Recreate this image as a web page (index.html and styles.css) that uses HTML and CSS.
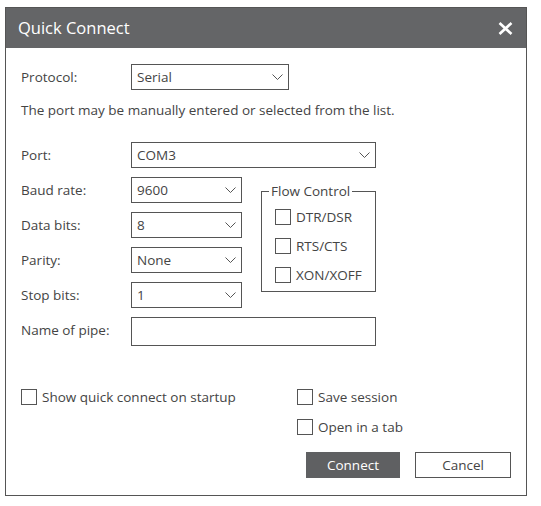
FILE: index.html
```html
<!DOCTYPE html>
<html lang="en">
<head>
    <meta charset="UTF-8">
    <meta name="viewport" content="width=device-width, initial-scale=1.0">
    <title>Quick Connect</title>
    <link rel="stylesheet" href="styles.css">
</head>
<body>

<!-- Dialog -->
<div class="dialog">
    <div class="title-bar">
        <span class="title">Quick Connect</span>
        <svg class="close-icon" width="15" height="13" viewBox="0 0 15 13">
            <path d="M1.5 1 L13.5 12 M13.5 1 L1.5 12" stroke="#fff" stroke-width="2.6" fill="none"/>
        </svg>
    </div>

    <div class="dialog-body">
        <div class="protocol-row">
            <span class="field-label">Protocol:</span>
            <div class="select select-protocol">
                <span>Serial</span>
                <svg class="chevron" width="11" height="6" viewBox="0 0 11 6"><path d="M0.5 0.5 L5.5 5.5 L10.5 0.5" stroke="#555" stroke-width="1" fill="none"/></svg>
            </div>
        </div>

        <p class="hint">The port may be manually entered or selected from the list.</p>

        <div class="form-grid">
            <span class="field-label">Port:</span>
            <div class="select select-wide">
                <span>COM3</span>
                <svg class="chevron" width="11" height="6" viewBox="0 0 11 6"><path d="M0.5 0.5 L5.5 5.5 L10.5 0.5" stroke="#555" stroke-width="1" fill="none"/></svg>
            </div>

            <span class="field-label">Baud rate:</span>
            <div class="select">
                <span>9600</span>
                <svg class="chevron" width="11" height="6" viewBox="0 0 11 6"><path d="M0.5 0.5 L5.5 5.5 L10.5 0.5" stroke="#555" stroke-width="1" fill="none"/></svg>
            </div>

            <fieldset class="flow-control">
                <legend>Flow Control</legend>
                <div class="check"><span class="box"></span>DTR/DSR</div>
                <div class="check"><span class="box"></span>RTS/CTS</div>
                <div class="check"><span class="box"></span>XON/XOFF</div>
            </fieldset>

            <span class="field-label">Data bits:</span>
            <div class="select">
                <span>8</span>
                <svg class="chevron" width="11" height="6" viewBox="0 0 11 6"><path d="M0.5 0.5 L5.5 5.5 L10.5 0.5" stroke="#555" stroke-width="1" fill="none"/></svg>
            </div>

            <span class="field-label">Parity:</span>
            <div class="select">
                <span>None</span>
                <svg class="chevron" width="11" height="6" viewBox="0 0 11 6"><path d="M0.5 0.5 L5.5 5.5 L10.5 0.5" stroke="#555" stroke-width="1" fill="none"/></svg>
            </div>

            <span class="field-label">Stop bits:</span>
            <div class="select">
                <span>1</span>
                <svg class="chevron" width="11" height="6" viewBox="0 0 11 6"><path d="M0.5 0.5 L5.5 5.5 L10.5 0.5" stroke="#555" stroke-width="1" fill="none"/></svg>
            </div>

            <span class="field-label">Name of pipe:</span>
            <div class="text-input"></div>
        </div>

        <div class="options">
            <div class="options-left">
                <div class="check"><span class="box"></span>Show quick connect on startup</div>
            </div>
            <div class="options-right">
                <div class="check"><span class="box"></span>Save session</div>
                <div class="check"><span class="box"></span>Open in a tab</div>
            </div>
        </div>

        <div class="buttons">
            <div class="btn btn-primary">Connect</div>
            <div class="btn">Cancel</div>
        </div>
    </div>
</div>

</body>
</html>
```

FILE: styles.css
```css
body {
    margin: 0;
    background: #fff;
    font-family: "Open Sans", "Noto Sans", sans-serif;
    font-size: 13.5px;
    color: #444;
}

/* Dialog frame */
.dialog {
    box-sizing: border-box;
    width: 522px;
    margin: 7px 0 0 5px;
    border: 1px solid #555;
}

.title-bar {
    height: 40px;
    background: #646567;
    display: flex;
    align-items: center;
    justify-content: space-between;
    padding: 0 12px 0 12px;
}

.title {
    color: #fff;
    font-size: 16.5px;
    padding-bottom: 1px;
}

.close-icon {
    margin-right: 1px;
}

.dialog-body {
    padding: 16px 15px 17px 15px;
}

.field-label {
    line-height: 26px;
}

/* Protocol */
.protocol-row {
    display: flex;
    align-items: center;
}

.protocol-row .field-label {
    width: 110px;
}

.hint {
    margin: 10px 0 0 0;
    line-height: 20px;
}

/* Select boxes */
.select {
    box-sizing: border-box;
    height: 26px;
    border: 1px solid #555;
    display: flex;
    align-items: center;
    justify-content: space-between;
    padding: 0 5px 0 5px;
    background: #fff;
}

.select-protocol {
    width: 158px;
}

.select-wide {
    grid-column: 2 / 5;
}

.form-grid {
    margin-top: 22px;
    display: grid;
    grid-template-columns: 110px 111px 19px 115px;
    grid-auto-rows: 26px;
    row-gap: 9px;
    align-items: center;
}

.form-grid .field-label {
    grid-column: 1;
}

.text-input {
    grid-column: 2 / 5;
    box-sizing: border-box;
    height: 29px;
    border: 1px solid #555;
    align-self: start;
}

/* Flow control group */
.flow-control {
    grid-column: 4;
    grid-row: 2 / 6;
    align-self: start;
    margin: 5px 0 0 0;
    border: 1px solid #555;
    padding: 9px 0 8px 13px;
    display: flex;
    flex-direction: column;
    gap: 13px;
}

.flow-control legend {
    margin-left: -6px;
    padding: 0 2px;
    line-height: 18px;
}

/* Checkboxes */
.check {
    display: flex;
    align-items: center;
    gap: 5px;
    height: 16px;
    white-space: nowrap;
}

.box {
    box-sizing: border-box;
    width: 16px;
    height: 16px;
    border: 1px solid #555;
    flex-shrink: 0;
}

.options {
    margin-top: 46px;
    display: flex;
}

.options-left {
    width: 276px;
}

.options-right {
    display: flex;
    flex-direction: column;
    gap: 14px;
}

/* Buttons */
.buttons {
    margin-top: 17px;
    display: flex;
    justify-content: flex-end;
    gap: 15px;
}

.btn {
    box-sizing: border-box;
    width: 96px;
    height: 26px;
    border: 1px solid #555;
    display: flex;
    align-items: center;
    justify-content: center;
    background: #fff;
}

.btn-primary {
    width: 94px;
    background: #5f6062;
    border-color: #5f6062;
    color: #fff;
}
```
